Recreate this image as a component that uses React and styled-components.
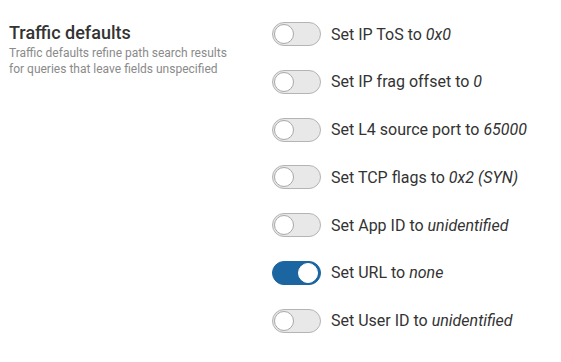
import React from 'react'
import styled, { createGlobalStyle } from 'styled-components'

const GlobalStyles = createGlobalStyle`
  body {
    margin: 0;
    background: #fff;
    font-family: Roboto, 'Liberation Sans', sans-serif;
  }
`

const Page = styled.div`
  display: grid;
  grid-template-columns: 272px 1fr;
  padding: 22px 0 0 9px;
  box-sizing: border-box;
  width: 561px;
  height: 362px;
`

const Intro = styled.div`
  margin-top: -1px;
`

const Title = styled.h2`
  margin: 0;
  font-size: 18px;
  line-height: 24px;
  font-weight: 500;
  color: #333;
`

const Description = styled.p`
  margin: 0;
  font-size: 12px;
  line-height: 16px;
  color: #8a8a8a;
`

const Options = styled.div`
  display: flex;
  flex-direction: column;
  gap: 23.8px;
  margin-left: -9px;
`

const Row = styled.label`
  display: flex;
  align-items: center;
  gap: 10px;
  height: 24px;
  font-size: 16px;
  color: #333;
`

const Track = styled.span`
  position: relative;
  box-sizing: border-box;
  width: 49px;
  height: 24px;
  border-radius: 12px;
  flex-shrink: 0;
  background: ${p => (p.$on ? '#1b65a1' : '#e8e8e8')};
  border: 1px solid ${p => (p.$on ? '#1b65a1' : '#b4b4b4')};
`

const Knob = styled.span`
  position: absolute;
  top: 1px;
  left: ${p => (p.$on ? '25px' : '1px')};
  box-sizing: border-box;
  width: 20px;
  height: 20px;
  border-radius: 50%;
  background: #fff;
  border: 1px solid ${p => (p.$on ? '#fff' : '#a8a8a8')};
`

const Value = styled.em`
  font-style: italic;
`

const options = [
  { label: 'Set IP ToS to', value: '0x0' },
  { label: 'Set IP frag offset to', value: '0' },
  { label: 'Set L4 source port to', value: '65000' },
  { label: 'Set TCP flags to', value: '0x2 (SYN)' },
  { label: 'Set App ID to', value: 'unidentified' },
  { label: 'Set URL to', value: 'none', on: true },
  { label: 'Set User ID to', value: 'unidentified' },
]

export default function App() {
  return (
    <Page>
      <GlobalStyles />
      <Intro>
        <Title>Traffic defaults</Title>
        <Description>
          Traffic defaults refine path search results
          <br />
          for queries that leave fields unspecified
        </Description>
      </Intro>
      <Options>
        {options.map(o => (
          <Row key={o.label}>
            <Track $on={o.on}>
              <Knob $on={o.on} />
            </Track>
            <span>
              {o.label} <Value>{o.value}</Value>
            </span>
          </Row>
        ))}
      </Options>
    </Page>
  )
}
